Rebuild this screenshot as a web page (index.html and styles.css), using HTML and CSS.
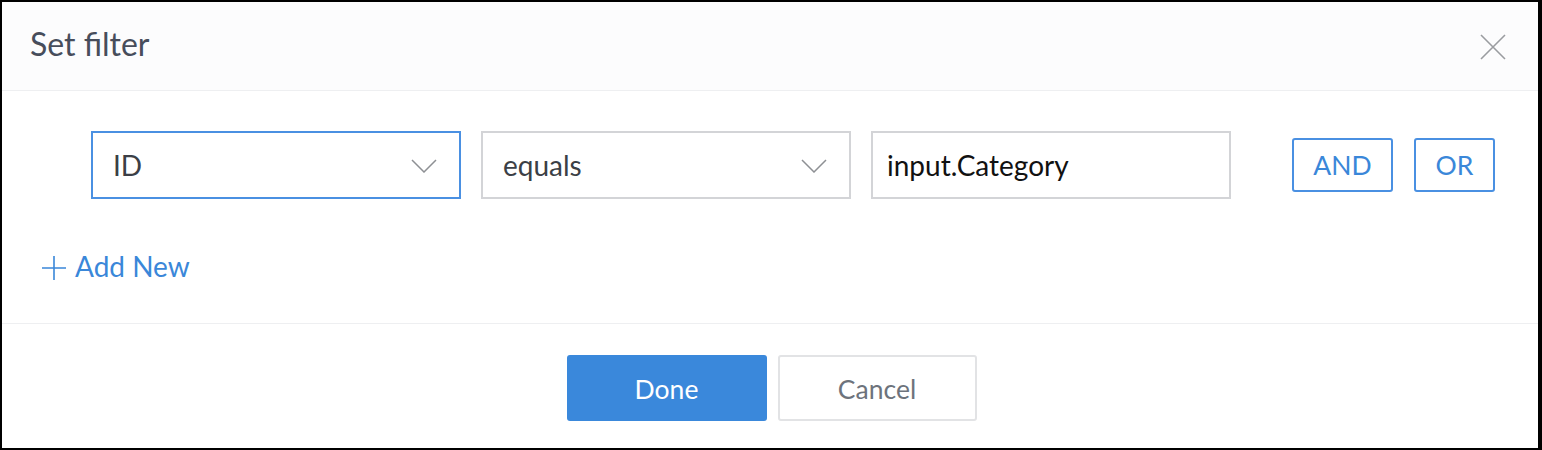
FILE: index.html
```html
<!DOCTYPE html>
<html>
<head>
<meta charset="utf-8">
<link rel="stylesheet" href="styles.css">
</head>
<body>
<div class="modal">
  <div class="header">
    <h1 class="title">Set filter</h1>
    <button class="close" aria-label="Close">
      <svg width="26" height="26" viewBox="0 0 26 26"><path d="M1 1L25 25M25 1L1 25" stroke="#9a9ca0" stroke-width="1.6" fill="none"/></svg>
    </button>
  </div>
  <div class="body">
    <div class="row">
      <div class="field select active">
        <span>ID</span>
        <svg class="chev" width="26" height="14" viewBox="0 0 26 14"><path d="M1 1L13 13L25 1" stroke="#8e9094" stroke-width="1.5" fill="none"/></svg>
      </div>
      <div class="field select">
        <span>equals</span>
        <svg class="chev" width="26" height="14" viewBox="0 0 26 14"><path d="M1 1L13 13L25 1" stroke="#8e9094" stroke-width="1.5" fill="none"/></svg>
      </div>
      <div class="field input"><span>input.Category</span></div>
      <div class="logic">
        <button class="lbtn and">AND</button>
        <button class="lbtn or">OR</button>
      </div>
    </div>
    <div class="add">
      <svg width="26" height="26" viewBox="0 0 26 26"><path d="M13 1V25M1 13H25" stroke="#3a87d9" stroke-width="1.6" fill="none"/></svg>
      <span>Add New</span>
    </div>
  </div>
  <div class="footer">
    <button class="btn done">Done</button>
    <button class="btn cancel">Cancel</button>
  </div>
</div>
</body>
</html>
```
FILE: styles.css
```css
* { box-sizing: border-box; }
html, body { margin: 0; padding: 0; }
body {
  background: #000;
  width: 1542px;
  height: 450px;
  padding: 2px 4px 2px 2px;
  font-family: Lato, "Open Sans", sans-serif;
}
.modal {
  width: 1536px;
  height: 446px;
  background: #fff;
  display: flex;
  flex-direction: column;
}
.header {
  height: 89px;
  background: #fcfcfd;
  border-bottom: 1px solid #eeeff1;
  display: flex;
  align-items: center;
  justify-content: space-between;
  padding: 0 32px 0 28px;
}
.title {
  margin: 0;
  font-size: 32px;
  font-weight: 400;
  color: #474d5b;
  padding-bottom: 5px;
}
.close {
  background: none;
  border: 0;
  padding: 0;
  width: 26px;
  height: 26px;
  display: flex;
  margin-top: 2px;
}
.body {
  height: 233px;
  border-bottom: 1px solid #eeeff1;
  padding: 40px 0 0 39px;
}
.row {
  display: flex;
  align-items: center;
  padding-left: 50px;
}
.field {
  width: 370px;
  height: 68px;
  border: 2px solid #d3d4d7;
  display: flex;
  align-items: center;
  justify-content: space-between;
  padding: 0 22px 0 20px;
  margin-right: 20px;
  font-size: 28px;
  color: #3b3f46;
}
.field.active { border-color: #4a90e2; }
.chev { margin-top: 2px; }
.field.input {
  width: 360px;
  color: #111;
  padding-left: 14px;
  margin-right: 0;
}
.logic {
  display: flex;
  gap: 21px;
  margin-left: 61px;
}
.lbtn {
  height: 54px;
  background: #fff;
  border: 2px solid #4a90e2;
  border-radius: 3px;
  color: #3a87d9;
  font-family: Lato, sans-serif;
  font-size: 26.5px;
  padding: 0;
}
.lbtn.and { width: 101px; }
.lbtn.or { width: 81px; }
.add {
  display: flex;
  align-items: center;
  gap: 8px;
  margin-top: 50px;
  color: #3a87d9;
  font-size: 28px;
}
.add span { padding-bottom: 4px; }
.footer {
  flex: 1;
  display: flex;
  justify-content: center;
  align-items: flex-start;
  gap: 11px;
  padding-top: 31px;
  padding-left: 3px;
}
.btn {
  width: 200px;
  height: 66px;
  border-radius: 3px;
  font-family: Lato, sans-serif;
  font-size: 26.5px;
  padding: 2px 0 0;
}
.done {
  background: #3a88db;
  border: 0;
  color: #fff;
}
.cancel {
  width: 199px;
  background: #fff;
  border: 2px solid #e2e3e5;
  color: #6d737c;
}
```
